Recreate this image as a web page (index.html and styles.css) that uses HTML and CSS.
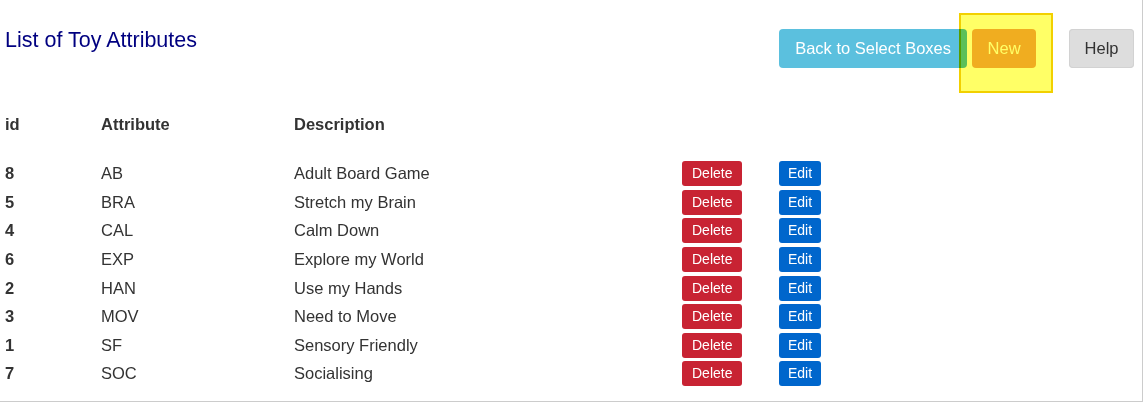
FILE: index.html
```html
<!DOCTYPE html>
<html>
<head>
<meta charset="utf-8">
<title>List of Toy Attributes</title>
<link rel="stylesheet" href="styles.css">
</head>
<body>
<div class="page">
  <div class="top">
    <h1 class="title">List of Toy Attributes</h1>
    <div class="actions">
      <a href="#" class="btn btn-info">Back to Select Boxes</a>
      <span class="hl-wrap">
        <a href="#" class="btn btn-warning">New</a>
        <span class="highlight"></span>
      </span>
      <a href="#" class="btn btn-default">Help</a>
    </div>
  </div>

  <table class="list">
    <colgroup>
      <col class="c-id"><col class="c-attr"><col class="c-desc"><col class="c-del"><col>
    </colgroup>
    <thead>
      <tr><th>id</th><th>Attribute</th><th>Description</th><th></th><th></th></tr>
    </thead>
    <tbody>
      <tr><td class="id">8</td><td>AB</td><td>Adult Board Game</td><td><a href="#" class="sm sm-del">Delete</a></td><td><a href="#" class="sm sm-edit">Edit</a></td></tr>
      <tr><td class="id">5</td><td>BRA</td><td>Stretch my Brain</td><td><a href="#" class="sm sm-del">Delete</a></td><td><a href="#" class="sm sm-edit">Edit</a></td></tr>
      <tr><td class="id">4</td><td>CAL</td><td>Calm Down</td><td><a href="#" class="sm sm-del">Delete</a></td><td><a href="#" class="sm sm-edit">Edit</a></td></tr>
      <tr><td class="id">6</td><td>EXP</td><td>Explore my World</td><td><a href="#" class="sm sm-del">Delete</a></td><td><a href="#" class="sm sm-edit">Edit</a></td></tr>
      <tr><td class="id">2</td><td>HAN</td><td>Use my Hands</td><td><a href="#" class="sm sm-del">Delete</a></td><td><a href="#" class="sm sm-edit">Edit</a></td></tr>
      <tr><td class="id">3</td><td>MOV</td><td>Need to Move</td><td><a href="#" class="sm sm-del">Delete</a></td><td><a href="#" class="sm sm-edit">Edit</a></td></tr>
      <tr><td class="id">1</td><td>SF</td><td>Sensory Friendly</td><td><a href="#" class="sm sm-del">Delete</a></td><td><a href="#" class="sm sm-edit">Edit</a></td></tr>
      <tr><td class="id">7</td><td>SOC</td><td>Socialising</td><td><a href="#" class="sm sm-del">Delete</a></td><td><a href="#" class="sm sm-edit">Edit</a></td></tr>
    </tbody>
  </table>
</div>
</body>
</html>
```

FILE: styles.css
```css
body
{
	margin:0;
	background:#fff;
	font-family:"Liberation Sans", Arial, sans-serif;
	color:#333;
}
.page
{
	width:1143px;
	box-sizing:border-box;
	padding:29px 8px 13px 5px;
	border-right:1px solid #ccc;
	border-bottom:1px solid #ccc;
}
.top
{
	display:flex;
	justify-content:space-between;
	align-items:flex-start;
}
.title
{
	margin:0;
	font-size:21.5px;
	font-weight:normal;
	line-height:23px;
	color:#000080;
}
.actions
{
	display:flex;
	align-items:flex-start;
}
.btn
{
	display:block;
	padding:7px 15px;
	font-size:16.5px;
	line-height:25px;
	border-radius:4px;
	text-decoration:none;
	color:#fff;
}
.btn-info
{
	background:#5bc0de;
	margin-right:5px;
	padding:7px 16px;
}
.btn-warning
{
	background:#f0ad4e;
	padding:7px 15.5px;
}
.btn-default
{
	background:#dddddd;
	color:#333;
	margin-left:33px;
	padding:7px 15.5px;
	box-shadow:inset 0 0 0 1px #d2d2d2;
}
.hl-wrap
{
	position:relative;
	display:block;
}
/* yellow marker box drawn over the New button */
.highlight
{
	position:absolute;
	left:-13px;
	top:-16px;
	width:94px;
	height:80px;
	box-sizing:border-box;
	border:2px solid #f2d000;
	background:#ffff66;
	mix-blend-mode:multiply;
}
.list
{
	margin-top:42px;
	border-collapse:collapse;
	table-layout:fixed;
	width:1129px;
	font-size:16.5px;
}
.c-id{width:96px;}
.c-attr{width:193px;}
.c-desc{width:388px;}
.c-del{width:97px;}
.list th
{
	text-align:left;
	font-weight:bold;
	padding:0 0 21px;
	height:28.57px;
	vertical-align:middle;
}
.list td
{
	padding:0;
	height:28.57px;
	vertical-align:middle;
}
.list td.id
{
	font-weight:bold;
}
.sm
{
	display:inline-block;
	vertical-align:middle;
	font-size:14px;
	line-height:21px;
	padding:2px 9px;
	border-radius:3px;
	color:#fff;
	text-decoration:none;
}
.sm-del
{
	background:#c82333;
	padding:2px 10px;
}
.sm-edit
{
	background:#0066cc;
}
```
